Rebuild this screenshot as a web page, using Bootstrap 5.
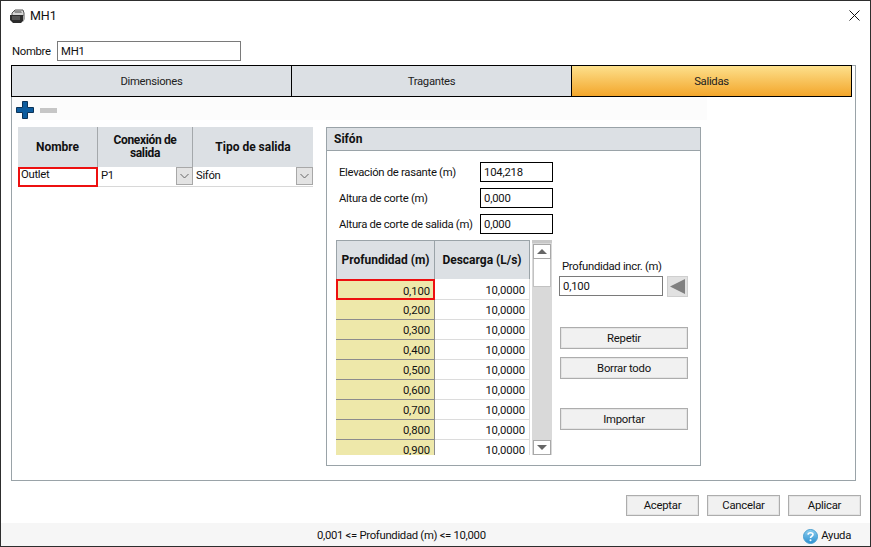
<!DOCTYPE html>
<html lang="es">
<head>
<meta charset="utf-8">
<title>MH1</title>
<link rel="stylesheet" href="https://cdn.jsdelivr.net/npm/bootstrap@5.3.0/dist/css/bootstrap.min.css">
<style>
html,body{margin:0;height:100%;overflow:hidden;background:#fff}
body{font-family:Roboto,"Liberation Sans",sans-serif;font-size:11.3px;letter-spacing:-.3px;line-height:16px;color:#111}
.win{width:871px;height:547px;border:1px solid #2e2e2e;background:#fff}
.titlebar{height:29px;padding-left:8px;font-size:12.5px;letter-spacing:-.1px}
.closex{margin-right:10px}
.namerow{height:20px;margin-top:11px;padding-left:11px}
.namelbl{width:45px;padding-top:2px}
.fld.form-control{font-size:11.3px;letter-spacing:-.2px;line-height:16px;height:20px;padding:0 3px;border-radius:0;border:1px solid #000;color:#111;box-shadow:none;min-height:0;background:#fff}
.fld.fld-gray{border-color:#7a7a7a}
.w-name{width:184px}
.outer{width:845px;height:416px;margin:4px 0 0 10px;border:1px solid #9aa3a8}
.tabsbar{width:841px;height:32px;margin:-1px 0 0 -1px;flex-wrap:nowrap}
.tabsbar .nav-link{width:100%;height:32px;padding:1px 0 0;border:1px solid #000;border-left-width:0;border-radius:0;background:#dce0e4;color:#222;font-size:11.3px;line-height:30px;text-align:center}
.tabsbar .nav-item:first-child .nav-link{border-left-width:1px}
.tabsbar .nav-item{width:280px;display:flex}
.tabsbar .nav-item:first-child{width:281px}
.tabsbar .nav-link.active{background:linear-gradient(#fde08c,#f3a62b);color:#222}
.toolstrip{width:695px;height:23px;background:#fcfcfc;padding:4px 0 0 4px}
.toolgap{width:6px}
.cols{padding-left:6px;margin-top:7px}
.leftgrid{width:295px}
.gh{height:40px;background:#dce0e4;font-weight:700;font-size:12px;letter-spacing:0;text-align:center;line-height:13px;border-right:1px solid #a4a8ab;padding:0 4px;color:#111}
.gh-tight{letter-spacing:-.35px}
.c1{width:80px}.c2{width:95px}.c3{width:120px;border-right:0}
.grow1{height:20px;border-bottom:1px solid #d8d8d8}
.gc{height:19px;padding-left:3px;line-height:18px}
.redcell{height:20px;border:2px solid #ed1010;padding:0 0 0 1px;line-height:11px;background:#fff}
.combo{width:17px;height:18px;margin:0 0 0 auto;background:#e3e3e3;border:1px solid #a8a8a8}
.sifon{width:375px;height:339px;margin-left:13px;border:1px solid #9aa3a8}
.sifhead{height:23px;background:#dce0e4;font-weight:700;font-size:12px;letter-spacing:0;padding-left:7px;line-height:22px;border-bottom:1px solid #9aa3a8}
.frow{height:20px;margin-bottom:6px;padding-left:12px}
.flbl{width:141px;padding-top:1px}
.w-num{width:73px}
.forms{padding-top:11px}
.lower{padding-left:9px}
.tblwrap{width:194px;height:215px;overflow:hidden}
.th1{width:99px;height:39px;background:#dce0e4;font-weight:700;font-size:12px;letter-spacing:0;text-align:center;border:1px solid #9aa3a8;border-bottom:0;color:#111}
.th2{width:95px;height:39px;background:#dce0e4;font-weight:700;font-size:12px;letter-spacing:0;text-align:center;border-top:1px solid #9aa3a8;border-right:1px solid #9aa3a8;color:#111}
.td1{width:99px;height:20px;background:#eee8aa;border-right:1px solid #8c8c8c;border-bottom:1px solid #8c8c8c;text-align:right;padding:1px 4px 0 0;line-height:19px;letter-spacing:-.1px}
.td2{width:95px;height:20px;background:#fff;border-right:1px solid #dcdcdc;border-bottom:1px solid #dcdcdc;text-align:right;padding:1px 4px 0 0;line-height:19px;letter-spacing:-.1px}
.td1.sel{height:21px;border:2px solid #ed1010;padding:2px 3px 0 0;line-height:17px}
.td2.first{height:21px;padding-top:2px}
.sbar{width:20px;height:215px;margin-left:2px;background:#d9d9d9;border-top:3px solid #c8c8c8;padding:1px 1px 0 1px}
.sbtn{height:15px;background:#fff;border:1px solid #a8a8a8}
.sthumb{height:28px;background:#fff;border:1px solid #c2c2c2;border-top:0}
.sspace{flex:1 1 auto}
.rightside{margin-left:7px;width:130px}
.rlbl{margin:19px 0 1px 3px}
.w-incr{width:104px}
.arrowbtn{width:21px;height:21px;margin-left:4px;background:#e1e1e1;border:1px solid #cfcfcf}
.wbtn.btn{font-size:11.3px;letter-spacing:-.25px;line-height:16px;height:22px;padding:1px 0 0;border-radius:0;border:1px solid #adadad;background:#f1f1f1;box-shadow:inset 0 0 0 1px #e4e4e4;color:#111}
.sidebtn{width:128px;margin-left:1px}
.mt-a{margin-top:30px}.mt-b{margin-top:8px}.mt-c{margin-top:29px}
.footbtns{margin-top:14px;height:21px;padding-right:9px}
.footbtns .wbtn.btn{height:21px;width:73px}
.fgap1{margin-left:8px}.fgap2{margin-left:8px}
.statusrow{height:23px;margin-top:7px;background:#f6f6f6;padding:3px 19px 0 0;line-height:20px}
.statustext{margin-left:316px}
.helpic{margin-right:3px}
</style>
</head>
<body>
<div class="win d-flex flex-column">
  <div class="titlebar d-flex align-items-center">
    <svg width="17" height="17" viewBox="0 0 17 17" class="me-1">
      <path d="M3 6 L6 3 H14 L15 6 V9 H3 Z" fill="#d6d6d6" stroke="#555" stroke-width="1"/>
      <path d="M1 8 H14 L15 13 L12 16 H4 L1 13 Z" fill="#2c2c2c"/>
      <path d="M5 4 H12 L13 6 H6 Z" fill="#8d8d8d"/>
      <path d="M14 9 L16 8 V12 L14 15 Z" fill="#a8a8a8"/>
      <path d="M3 10 H11 M3 12 H11" stroke="#7d7d7d" stroke-width="1"/>
    </svg>
    <span>MH1</span>
    <svg width="11" height="11" viewBox="0 0 11 11" class="ms-auto closex"><path d="M.5.5 10.5 10.5M10.5.5.5 10.5" stroke="#111" stroke-width="1"/></svg>
  </div>
  <div class="namerow d-flex align-items-center">
    <label class="namelbl">Nombre</label>
    <input class="form-control fld fld-gray w-name" value="MH1">
  </div>
  <div class="outer">
    <ul class="nav tabsbar">
      <li class="nav-item"><a class="nav-link" href="#">Dimensiones</a></li>
      <li class="nav-item"><a class="nav-link" href="#">Tragantes</a></li>
      <li class="nav-item"><a class="nav-link active" href="#">Salidas</a></li>
    </ul>
    <div class="toolstrip d-flex align-items-start">
      <svg width="18" height="18" viewBox="0 0 18 18"><path d="M6.5.5H11.5V6.5H17.5V11.5H11.5V17.5H6.5V11.5H.5V6.5H6.5Z" fill="#0d5c9e" stroke="#0b3358"/></svg>
      <span class="toolgap"></span>
      <svg width="17" height="18" viewBox="0 0 17 18"><rect x="0" y="7" width="17" height="5" fill="#c6c6c6"/></svg>
    </div>
    <div class="cols d-flex align-items-start">
      <div class="leftgrid">
        <div class="d-flex">
          <div class="gh c1 d-flex align-items-center justify-content-center">Nombre</div>
          <div class="gh gh-tight c2 d-flex align-items-center justify-content-center">Conexión de salida</div>
          <div class="gh c3 d-flex align-items-center justify-content-center">Tipo de salida</div>
        </div>
        <div class="d-flex grow1">
          <div class="c1 redcell">Outlet</div>
          <div class="c2 gc d-flex"><span>P1</span>
            <span class="combo d-flex align-items-center justify-content-center"><svg width="9" height="6" viewBox="0 0 9 6"><path d="M.5 1 4.5 5 8.5 1" fill="none" stroke="#666"/></svg></span>
          </div>
          <div class="c3 gc d-flex"><span>Sifón</span>
            <span class="combo d-flex align-items-center justify-content-center"><svg width="9" height="6" viewBox="0 0 9 6"><path d="M.5 1 4.5 5 8.5 1" fill="none" stroke="#666"/></svg></span>
          </div>
        </div>
      </div>
      <div class="sifon">
        <div class="sifhead">Sifón</div>
        <div class="forms">
          <div class="frow d-flex align-items-center"><span class="flbl">Elevación de rasante (m)</span><input class="form-control fld w-num" value="104,218"></div>
          <div class="frow d-flex align-items-center"><span class="flbl">Altura de corte (m)</span><input class="form-control fld w-num" value="0,000"></div>
          <div class="frow d-flex align-items-center"><span class="flbl">Altura de corte de salida (m)</span><input class="form-control fld w-num" value="0,000"></div>
        </div>
        <div class="lower d-flex align-items-start">
          <div class="tblwrap">
            <div class="d-flex">
              <div class="th1 d-flex align-items-center justify-content-center">Profundidad (m)</div>
              <div class="th2 d-flex align-items-center justify-content-center">Descarga (L/s)</div>
            </div>
            <div class="d-flex"><div class="td1 sel">0,100</div><div class="td2 first">10,0000</div></div>
            <div class="d-flex"><div class="td1">0,200</div><div class="td2">10,0000</div></div>
            <div class="d-flex"><div class="td1">0,300</div><div class="td2">10,0000</div></div>
            <div class="d-flex"><div class="td1">0,400</div><div class="td2">10,0000</div></div>
            <div class="d-flex"><div class="td1">0,500</div><div class="td2">10,0000</div></div>
            <div class="d-flex"><div class="td1">0,600</div><div class="td2">10,0000</div></div>
            <div class="d-flex"><div class="td1">0,700</div><div class="td2">10,0000</div></div>
            <div class="d-flex"><div class="td1">0,800</div><div class="td2">10,0000</div></div>
            <div class="d-flex"><div class="td1">0,900</div><div class="td2">10,0000</div></div>
          </div>
          <div class="sbar d-flex flex-column">
            <div class="sbtn d-flex align-items-center justify-content-center"><svg width="10" height="6" viewBox="0 0 10 6"><path d="M5 0 10 5H0Z" fill="#666"/></svg></div>
            <div class="sthumb"></div>
            <div class="sspace"></div>
            <div class="sbtn d-flex align-items-center justify-content-center"><svg width="10" height="6" viewBox="0 0 10 6"><path d="M0 0H10L5 5Z" fill="#666"/></svg></div>
          </div>
          <div class="rightside">
            <div class="rlbl">Profundidad incr. (m)</div>
            <div class="d-flex">
              <input class="form-control fld fld-gray w-incr" value="0,100">
              <span class="arrowbtn d-flex align-items-center justify-content-center"><svg width="15" height="15" viewBox="0 0 15 15"><path d="M15 0V15L0 7.5Z" fill="#808080"/></svg></span>
            </div>
            <button class="btn wbtn sidebtn d-block mt-a" type="button">Repetir</button>
            <button class="btn wbtn sidebtn d-block mt-b" type="button">Borrar todo</button>
            <button class="btn wbtn sidebtn d-block mt-c" type="button">Importar</button>
          </div>
        </div>
      </div>
    </div>
  </div>
  <div class="footbtns d-flex justify-content-end">
    <button class="btn wbtn" type="button">Aceptar</button>
    <button class="btn wbtn fgap1" type="button">Cancelar</button>
    <button class="btn wbtn fgap2" type="button">Aplicar</button>
  </div>
  <div class="statusrow d-flex align-items-center flex-grow-1">
    <span class="statustext">0,001 &lt;= Profundidad (m) &lt;= 10,000</span>
    <span class="ms-auto d-flex align-items-center">
      <svg class="helpic" width="15" height="15" viewBox="0 0 15 15">
        <defs><linearGradient id="hg" x1="0" y1="0" x2="0" y2="1"><stop offset="0" stop-color="#8fd0f0"/><stop offset="1" stop-color="#2a8fd0"/></linearGradient></defs>
        <circle cx="7.5" cy="7.5" r="7" fill="url(#hg)" stroke="#4a9fd0"/>
        <path d="M5 5.6C5.2 3.2 10 3.2 10 5.6 10 7.3 7.5 7.2 7.5 9" fill="none" stroke="#fff" stroke-width="1.6"/>
        <circle cx="7.5" cy="11.3" r="1" fill="#fff"/>
      </svg>
      Ayuda
    </span>
  </div>
</div>
<script src="https://cdn.jsdelivr.net/npm/bootstrap@5.3.0/dist/js/bootstrap.bundle.min.js"></script>
</body>
</html>
